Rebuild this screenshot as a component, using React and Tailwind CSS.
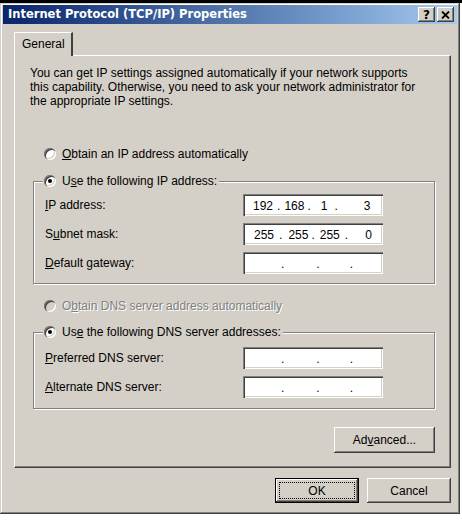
import React from "react";

const raised =
  "shadow-[inset_-1px_-1px_0_#404040,inset_1px_1px_0_#ffffff,inset_-2px_-2px_0_#808080,inset_2px_2px_0_#d4d0c8]";
const sunken =
  "shadow-[inset_1px_1px_0_#808080,inset_2px_2px_0_#404040,inset_-1px_-1px_0_#ffffff,inset_-2px_-2px_0_#d4d0c8]";

function Radio({ checked, disabled }) {
  return (
    <span
      className={
        "relative inline-block w-[12px] h-[12px] rounded-full shrink-0 shadow-[inset_1px_1px_0_#808080,inset_2px_2px_0_#404040,inset_-1px_-1px_0_#ffffff,inset_-2px_-2px_0_#d4d0c8] " +
        (disabled ? "bg-[#d4d0c8]" : "bg-white")
      }
    >
      {checked && (
        <span className="absolute left-[4px] top-[4px] w-[4px] h-[4px] rounded-full bg-black" />
      )}
    </span>
  );
}

function IpBox({ children }) {
  return (
    <div className={"w-[140px] h-[22px] bg-white flex items-center whitespace-pre leading-none pt-[1px] " + sunken}>
      {children}
    </div>
  );
}

function EmptyIp() {
  return (
    <IpBox>
      <span className="ml-[38px]">.</span>
      <span className="ml-[32px]">.</span>
      <span className="ml-[30px]">.</span>
    </IpBox>
  );
}

function Row({ label, children }) {
  return (
    <div className="flex items-center h-[22px]">
      <div className="w-[209px] pl-[11px] leading-[14px]">{label}</div>
      {children}
    </div>
  );
}

export default function App() {
  return (
    <div className="w-[462px] h-[520px] bg-white overflow-hidden font-['Liberation_Sans',Arial,sans-serif] text-[12px] text-black">
      <div className="h-[3px] bg-black" />
      <div className="w-[460px] h-[511px] bg-[#d4d0c8] pt-[2px] px-[3px] shadow-[inset_-1px_-1px_0_#404040,inset_1px_1px_0_#d4d0c8,inset_-2px_-2px_0_#808080,inset_2px_2px_0_#ffffff]">
        {/* Title bar */}
        <div className="h-[19px] flex items-center bg-linear-to-r from-[#0a246a] to-[#a6caf0]">
          <div className="pl-[5px] flex-1 text-white font-bold text-[11.5px] font-['DejaVu_Sans',Verdana,sans-serif] leading-none whitespace-nowrap">
            Internet Protocol (TCP/IP) Properties
          </div>
          <div className="flex gap-[2px] mr-[3px]">
            <div className={"w-[17px] h-[15px] bg-[#d4d0c8] flex items-center justify-center font-bold text-[12px] leading-none font-['DejaVu_Sans',Verdana,sans-serif] " + raised}>
              ?
            </div>
            <div className={"w-[17px] h-[15px] bg-[#d4d0c8] flex items-center justify-center " + raised}>
              <svg width="9" height="8" viewBox="0 0 9 8">
                <path d="M1 0.5 L8 7.5 M8 0.5 L1 7.5" stroke="#000" strokeWidth="1.8" />
              </svg>
            </div>
          </div>
        </div>

        {/* Tabs + panel */}
        <div className="ml-[11px] mr-[6px] mt-[8px]">
          <div className="flex h-[23px]">
            <div className="relative z-10 h-[24px] w-[59px] pl-[7px] pt-[4px] bg-[#d4d0c8] border-l border-t border-white border-r-2 border-r-[#404040] leading-[14px]">
              General
            </div>
          </div>
          <div className="h-[413px] border border-t-white border-l-white border-r-[#404040] border-b-[#404040] shadow-[inset_-1px_-1px_0_#808080] pl-[15px] pt-[10px] flex flex-col">
            <div className="leading-[14px] whitespace-nowrap">
              You can get IP settings assigned automatically if your network supports
              <br />
              this capability. Otherwise, you need to ask your network administrator for
              <br />
              the appropriate IP settings.
            </div>

            <div className="mt-[39px] ml-[14px] flex items-center gap-[6px] h-[14px]">
              <Radio />
              <span>
                <u>O</u>btain an IP address automatically
              </span>
            </div>

            <div className="mt-[20px] ml-[3px] w-[402px] h-[103px] border border-[#808080] shadow-[1px_1px_0_#ffffff,inset_1px_1px_0_#ffffff] flex flex-col">
              <div className="-mt-[8px] ml-[9px] pl-[1px] pr-[2px] w-fit bg-[#d4d0c8] flex items-center gap-[6px] h-[14px]">
                <Radio checked />
                <span>
                  U<u>s</u>e the following IP address:
                </span>
              </div>
              <div className="mt-[6px] flex flex-col gap-[7px]">
                <Row
                  label={
                    <>
                      <u>I</u>P address:
                    </>
                  }
                >
                  <IpBox>
                    <span className="ml-[10px]">192</span>
                    <span className="ml-[4px]">.</span>
                    <span className="ml-[4px]">168</span>
                    <span className="ml-[3px]">.</span>
                    <span className="ml-[10px]">1</span>
                    <span className="ml-[7px]">.</span>
                    <span className="ml-[26px]">3</span>
                  </IpBox>
                </Row>
                <Row
                  label={
                    <>
                      S<u>u</u>bnet mask:
                    </>
                  }
                >
                  <IpBox>
                    <span className="ml-[11px]">255</span>
                    <span className="ml-[5px]">.</span>
                    <span className="ml-[6px]">255</span>
                    <span className="ml-[3px]">.</span>
                    <span className="ml-[5px]">255</span>
                    <span className="ml-[5px]">.</span>
                    <span className="ml-[17px]">0</span>
                  </IpBox>
                </Row>
                <Row
                  label={
                    <>
                      <u>D</u>efault gateway:
                    </>
                  }
                >
                  <EmptyIp />
                </Row>
              </div>
            </div>

            <div className="mt-[15px] ml-[14px] flex items-center gap-[6px] h-[14px] text-[#808080] [text-shadow:1px_1px_0_#ffffff]">
              <Radio disabled />
              <span>
                O<u>b</u>tain DNS server address automatically
              </span>
            </div>

            <div className="mt-[19px] ml-[3px] w-[402px] h-[77px] border border-[#808080] shadow-[1px_1px_0_#ffffff,inset_1px_1px_0_#ffffff] flex flex-col">
              <div className="-mt-[8px] ml-[9px] pl-[1px] pr-[2px] w-fit bg-[#d4d0c8] flex items-center gap-[6px] h-[14px]">
                <Radio checked />
                <span>
                  Us<u>e</u> the following DNS server addresses:
                </span>
              </div>
              <div className="mt-[8px] flex flex-col gap-[7px]">
                <Row
                  label={
                    <>
                      <u>P</u>referred DNS server:
                    </>
                  }
                >
                  <EmptyIp />
                </Row>
                <Row
                  label={
                    <>
                      <u>A</u>lternate DNS server:
                    </>
                  }
                >
                  <EmptyIp />
                </Row>
              </div>
            </div>

            <div className={"mt-[18px] ml-[304px] w-[101px] h-[26px] bg-[#d4d0c8] flex items-center justify-center " + raised}>
              <span>
                Ad<u>v</u>anced...
              </span>
            </div>
          </div>
        </div>

        {/* Dialog buttons */}
        <div className="ml-[11px] mr-[6px] mt-[10px] flex justify-end gap-[8px]">
          <div className="w-[84px] h-[25px] border border-black bg-[#d4d0c8] p-0">
            <div className={"w-full h-full p-[3px] " + raised}>
              <div className="w-full h-full border border-dotted border-black flex items-center justify-center">
                OK
              </div>
            </div>
          </div>
          <div className={"w-[84px] h-[25px] bg-[#d4d0c8] flex items-center justify-center " + raised}>
            Cancel
          </div>
        </div>
      </div>
    </div>
  );
}
